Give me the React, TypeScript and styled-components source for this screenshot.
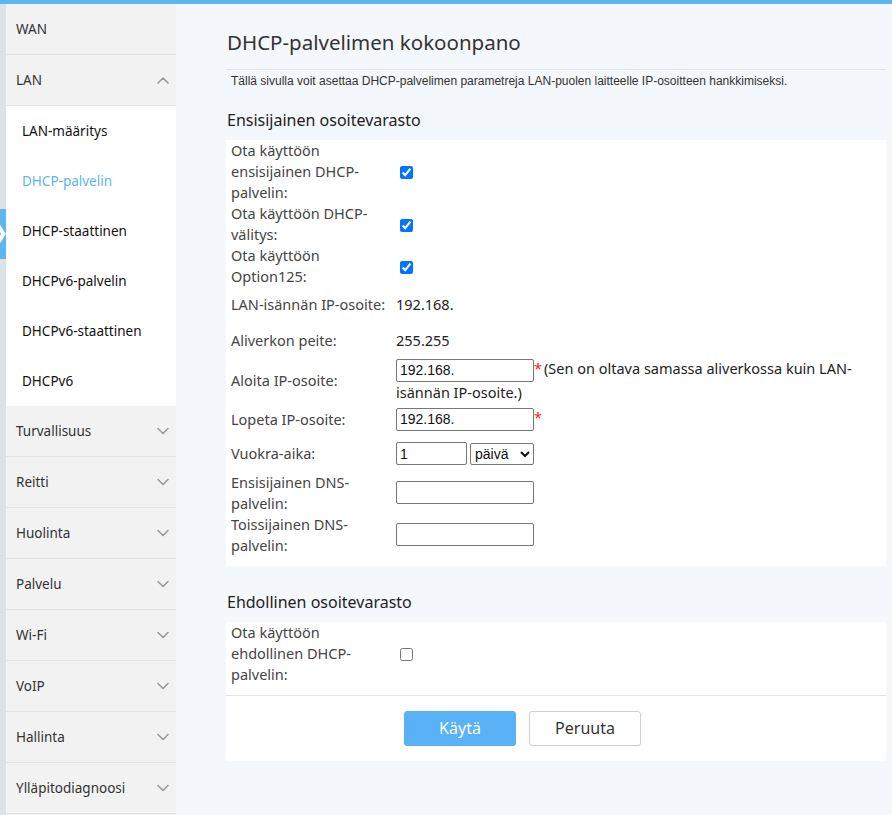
import React from 'react';
import styled, { createGlobalStyle } from 'styled-components';

const Global = createGlobalStyle`
  html, body { margin: 0; padding: 0; }
  body { font-family: "Noto Sans", "Liberation Sans", sans-serif; background: #f4f7fb; color: #333; }
`;

const Page = styled.div`
  display: flex;
  flex-direction: column;
  width: 892px;
  height: 815px;
  overflow: hidden;
`;

const TopBar = styled.div`
  height: 4px;
  flex: none;
  background: #5cb6ef;
`;

const Body = styled.div`
  display: flex;
  flex: 1;
  min-height: 0;
`;

const Strip = styled.div`
  width: 6px;
  flex: none;
  background: #dde2e6;
  padding-top: 205px;
  box-sizing: border-box;
`;

const StripTab = styled.div`
  height: 50px;
  background: #5cb6ef;
  display: flex;
  align-items: center;
  overflow: hidden;
`;

const Sidebar = styled.nav`
  width: 170px;
  flex: none;
  background: #f2f2f2;
  display: flex;
  flex-direction: column;
`;

const NavItem = styled.div<{ $sub?: boolean; $active?: boolean }>`
  height: 50px;
  flex: none;
  display: flex;
  align-items: center;
  justify-content: space-between;
  padding: 0 7px 0 ${(p) => (p.$sub ? '16px' : '10px')};
  border-bottom: ${(p) => (p.$sub ? 'none' : '1px solid #e3e3e3')};
  background: ${(p) => (p.$sub ? '#fff' : '#f2f2f2')};
  color: ${(p) => (p.$active ? '#5cb6ef' : p.$sub ? '#111' : '#333')};
  font-size: 13.5px;
`;

const Main = styled.main`
  flex: 1;
  min-width: 0;
  padding: 24px 6px 0 50px;
  display: flex;
  flex-direction: column;
`;

const Title = styled.h1`
  margin: 0 0 0 1px;
  font-size: 20.5px;
  line-height: 28px;
  font-weight: 400;
  color: #333;
`;

const Rule = styled.hr`
  margin: 13px 0 0;
  border: none;
  border-top: 1px solid #e1e4e8;
`;

const Desc = styled.p`
  margin: 4px 0 0 5px;
  font-family: "Liberation Sans", Arial, sans-serif;
  font-size: 12px;
  line-height: 14px;
  color: #333;
`;

const SectionTitle = styled.h2<{ $top: number }>`
  margin: ${(p) => p.$top}px 0 0 1px;
  font-size: 16px;
  line-height: 22px;
  font-weight: 400;
  color: #222;
`;

const Card = styled.section`
  margin-top: 9px;
  background: #fff;
`;

const Rows = styled.div`
  padding: 0 5px 10px;
`;

const Row = styled.div<{ $h?: number }>`
  display: grid;
  grid-template-columns: 162px 1fr;
  column-gap: 3px;
  align-items: center;
  min-height: ${(p) => p.$h ?? 0}px;
  font-size: 14.5px;
  line-height: 21px;
`;

const Label = styled.div`
  color: #444;
`;

const Value = styled.div`
  color: #222;
`;

const Check = styled.input.attrs({ type: 'checkbox' })`
  width: 13px;
  height: 13px;
  margin: 3px 3px 3px 4px;
  vertical-align: middle;
`;

const TextInput = styled.input.attrs({ type: 'text' })<{ $w?: number }>`
  box-sizing: border-box;
  width: ${(p) => p.$w ?? 138}px;
  height: 23px;
  margin: 0;
  padding: 1px 3px;
  border: 1px solid #767676;
  border-radius: 2px;
  font-family: "Liberation Sans", Arial, sans-serif;
  font-size: 14px;
  color: #111;
  vertical-align: middle;
  background: #fff;
`;

const Select = styled.select`
  box-sizing: border-box;
  width: 64px;
  height: 22px;
  margin: 0 0 0 3px;
  padding: 0 8px 0 0;
  border: 1px solid #767676;
  border-radius: 2px;
  font-family: "Liberation Sans", Arial, sans-serif;
  font-size: 14px;
  color: #111;
  background: #fff;
  vertical-align: middle;
`;

const Star = styled.span`
  color: #e22;
  margin-right: 2px;
`;

const Footer = styled.div`
  border-top: 1px solid #e3e3e3;
  padding: 15px 0 15px 178px;
  display: flex;
  gap: 13px;
`;

const Button = styled.button<{ $primary?: boolean }>`
  width: 112px;
  height: 35px;
  border-radius: 3px;
  border: 1px solid ${(p) => (p.$primary ? '#58b2f5' : '#cfcfcf')};
  background: ${(p) => (p.$primary ? '#58b2f5' : '#fff')};
  color: ${(p) => (p.$primary ? '#fff' : '#333')};
  font-family: "Noto Sans", "Liberation Sans", sans-serif;
  font-size: 16px;
  cursor: pointer;
`;

const Chevron = ({ up }: { up?: boolean }) => (
  <svg width="12" height="8" viewBox="0 0 12 8" fill="none">
    <polyline
      points={up ? '1,7 6,2 11,7' : '1,1.5 6,6.5 11,1.5'}
      stroke="#9a9a9a"
      strokeWidth="1.6"
      strokeLinejoin="round"
      strokeLinecap="round"
    />
  </svg>
);

const topItems = ['Turvallisuus', 'Reitti', 'Huolinta', 'Palvelu', 'Wi-Fi', 'VoIP', 'Hallinta', 'Ylläpitodiagnoosi'];
const subItems = ['LAN-määritys', 'DHCP-palvelin', 'DHCP-staattinen', 'DHCPv6-palvelin', 'DHCPv6-staattinen', 'DHCPv6'];

export default function App() {
  return (
    <Page>
      <Global />
      <TopBar />
      <Body>
        <Strip>
          <StripTab>
            <svg width="6" height="50" viewBox="0 0 6 50">
              <polyline points="-4,13 3.5,25 -4,37" stroke="#fff" strokeWidth="4" fill="none" />
            </svg>
          </StripTab>
        </Strip>
        <Sidebar>
          <NavItem>WAN</NavItem>
          <NavItem>
            LAN
            <Chevron up />
          </NavItem>
          {subItems.map((s) => (
            <NavItem key={s} $sub $active={s === 'DHCP-palvelin'}>
              {s}
            </NavItem>
          ))}
          {topItems.map((t) => (
            <NavItem key={t}>
              {t}
              <Chevron />
            </NavItem>
          ))}
        </Sidebar>
        <Main>
          <Title>DHCP-palvelimen kokoonpano</Title>
          <Rule />
          <Desc>
            Tällä sivulla voit asettaa DHCP-palvelimen parametreja LAN-puolen laitteelle IP-osoitteen hankkimiseksi.
          </Desc>
          <SectionTitle $top={21}>Ensisijainen osoitevarasto</SectionTitle>
          <Card>
            <Rows>
              <Row>
                <Label>Ota käyttöön ensisijainen DHCP-palvelin:</Label>
                <Value>
                  <Check defaultChecked />
                </Value>
              </Row>
              <Row>
                <Label>Ota käyttöön DHCP-välitys:</Label>
                <Value>
                  <Check defaultChecked />
                </Value>
              </Row>
              <Row>
                <Label>Ota käyttöön Option125:</Label>
                <Value>
                  <Check defaultChecked />
                </Value>
              </Row>
              <Row $h={35}>
                <Label>LAN-isännän IP-osoite:</Label>
                <Value>192.168.</Value>
              </Row>
              <Row $h={36}>
                <Label>Aliverkon peite:</Label>
                <Value>255.255</Value>
              </Row>
              <Row $h={44}>
                <Label>Aloita IP-osoite:</Label>
                <Value>
                  <TextInput defaultValue="192.168." />
                  <Star>*</Star>(Sen on oltava samassa aliverkossa kuin LAN-isännän IP-osoite.)
                </Value>
              </Row>
              <Row $h={33}>
                <Label>Lopeta IP-osoite:</Label>
                <Value>
                  <TextInput defaultValue="192.168." />
                  <Star>*</Star>
                </Value>
              </Row>
              <Row $h={36}>
                <Label>Vuokra-aika:</Label>
                <Value>
                  <TextInput $w={71} defaultValue="1" />
                  <Select defaultValue="d">
                    <option value="d">päivä(t)</option>
                    <option value="h">tunti(a)</option>
                    <option value="m">minuutti(a)</option>
                  </Select>
                </Value>
              </Row>
              <Row $h={42}>
                <Label>Ensisijainen DNS-palvelin:</Label>
                <Value>
                  <TextInput />
                </Value>
              </Row>
              <Row $h={42}>
                <Label>Toissijainen DNS-palvelin:</Label>
                <Value>
                  <TextInput />
                </Value>
              </Row>
            </Rows>
          </Card>
          <SectionTitle $top={25}>Ehdollinen osoitevarasto</SectionTitle>
          <Card>
            <Rows>
              <Row>
                <Label>Ota käyttöön ehdollinen DHCP-palvelin:</Label>
                <Value>
                  <Check />
                </Value>
              </Row>
            </Rows>
            <Footer>
              <Button $primary>Käytä</Button>
              <Button>Peruuta</Button>
            </Footer>
          </Card>
        </Main>
      </Body>
    </Page>
  );
}
